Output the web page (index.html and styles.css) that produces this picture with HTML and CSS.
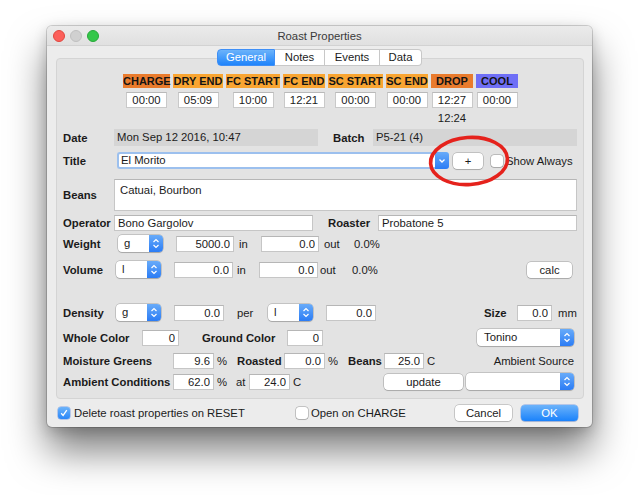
FILE: index.html
```html
<!DOCTYPE html>
<html lang="en">
<head>
  <meta charset="UTF-8">
  <meta name="viewport" content="width=device-width, initial-scale=1.0">
  <title>Roast Properties</title>
  <link rel="stylesheet" href="styles.css">
</head>
<body>
  <div class="desktop">
  <div class="window">
    <div class="titlebar">
      <div class="lights">
        <span class="light red"></span>
        <span class="light gray"></span>
        <span class="light green"></span>
      </div>
      <div class="title">Roast Properties</div>
    </div>

    <div class="tabs">
      <span class="tab active w58">General</span><span class="tab w50">Notes</span><span class="tab w55">Events</span><span class="tab w42">Data</span>
    </div>

    <div class="panel">
      <!-- event markers -->
      <div class="events">
        <div class="event w47"><span class="ev-label dark">CHARGE</span><span class="ev-time">00:00</span></div>
        <div class="event w50"><span class="ev-label">DRY END</span><span class="ev-time">05:09</span></div>
        <div class="event w54"><span class="ev-label">FC START</span><span class="ev-time">10:00</span></div>
        <div class="event w42"><span class="ev-label">FC END</span><span class="ev-time">12:21</span></div>
        <div class="event w55"><span class="ev-label">SC START</span><span class="ev-time">00:00</span></div>
        <div class="event w42"><span class="ev-label">SC END</span><span class="ev-time">00:00</span></div>
        <div class="event w42"><span class="ev-label dark">DROP</span><span class="ev-time">12:27</span><span class="ev-extra">12:24</span></div>
        <div class="event w42"><span class="ev-label cool">COOL</span><span class="ev-time">00:00</span></div>
      </div>

      <div class="row r-date">
        <span class="lbl w51">Date</span>
        <span class="readonly w204">Mon Sep 12 2016, 10:47</span>
        <span class="lbl w40 ml15">Batch</span>
        <span class="readonly w204">P5-21 (4)</span>
      </div>

      <div class="row r-title">
        <span class="lbl w54">Title</span>
        <div class="combo w332">
          <span class="combo-field">El Morito</span>
          <span class="combo-arrow">
            <svg width="14" height="17" viewBox="0 0 14 17"><path d="M4.5 7.5L7 10L9.5 7.5" fill="none" stroke="#fff" stroke-width="1.3"/></svg>
          </span>
        </div>
        <span class="btn w30 ml4">+</span>
        <span class="check ml8"></span>
        <span class="txt ml3">Show Always</span>
      </div>

      <div class="row r-beans">
        <span class="lbl w51">Beans</span>
        <div class="textarea w463">Catuai, Bourbon</div>
      </div>

      <div class="row r-operator">
        <span class="lbl w51">Operator</span>
        <input class="field left w199" value="Bono Gargolov">
        <span class="lbl w50 ml15">Roaster</span>
        <input class="field left w199" value="Probatone 5">
      </div>

      <div class="row r-weight">
        <span class="lbl w55">Weight</span>
        <div class="popup w45">
          <span class="popup-text">g</span>
          <span class="popup-arrow"><svg width="14" height="17" viewBox="0 0 14 17"><path d="M4.5 7L7 4.5L9.5 7M4.5 10L7 12.5L9.5 10" fill="none" stroke="#fff" stroke-width="1.2"/></svg></span>
        </div>
        <input class="field w58 ml13" value="5000.0">
        <span class="txt w22 ml5">in</span>
        <input class="field w58" value="0.0">
        <span class="txt w30 ml5">out</span>
        <span class="txt">0.0%</span>
      </div>

      <div class="row r-volume">
        <span class="lbl w53">Volume</span>
        <div class="popup w45">
          <span class="popup-text">l</span>
          <span class="popup-arrow"><svg width="14" height="17" viewBox="0 0 14 17"><path d="M4.5 7L7 4.5L9.5 7M4.5 10L7 12.5L9.5 10" fill="none" stroke="#fff" stroke-width="1.2"/></svg></span>
        </div>
        <input class="field w59 ml13" value="0.0">
        <span class="txt w22 ml4">in</span>
        <input class="field w59" value="0.0">
        <span class="txt w32 ml2">out</span>
        <span class="txt">0.0%</span>
        <span class="btn w45 push mr5">calc</span>
      </div>

      <div class="row r-density">
        <span class="lbl w53">Density</span>
        <div class="popup w45">
          <span class="popup-text">g</span>
          <span class="popup-arrow"><svg width="14" height="17" viewBox="0 0 14 17"><path d="M4.5 7L7 4.5L9.5 7M4.5 10L7 12.5L9.5 10" fill="none" stroke="#fff" stroke-width="1.2"/></svg></span>
        </div>
        <input class="field w50 ml13" value="0.0">
        <span class="txt w31 ml13">per</span>
        <div class="popup w45">
          <span class="popup-text">l</span>
          <span class="popup-arrow"><svg width="14" height="17" viewBox="0 0 14 17"><path d="M4.5 7L7 4.5L9.5 7M4.5 10L7 12.5L9.5 10" fill="none" stroke="#fff" stroke-width="1.2"/></svg></span>
        </div>
        <input class="field w50 ml13" value="0.0">
        <span class="lbl w33 push">Size</span>
        <input class="field w35" value="0.0">
        <span class="txt w19 ml6">mm</span>
      </div>

      <div class="row r-whole">
        <span class="lbl w79">Whole Color</span>
        <input class="field w37" value="0">
        <span class="lbl w85 ml23">Ground Color</span>
        <input class="field w36" value="0">
        <div class="popup w97 push mr3">
          <span class="popup-text wide">Tonino</span>
          <span class="popup-arrow"><svg width="14" height="17" viewBox="0 0 14 17"><path d="M4.5 7L7 4.5L9.5 7M4.5 10L7 12.5L9.5 10" fill="none" stroke="#fff" stroke-width="1.2"/></svg></span>
        </div>
      </div>

      <div class="row r-moist">
        <span class="lbl w110">Moisture Greens</span>
        <input class="field w41" value="9.6">
        <span class="txt w20 ml3">%</span>
        <span class="lbl w47">Roasted</span>
        <input class="field w41" value="0.0">
        <span class="txt w20 ml3">%</span>
        <span class="lbl w36">Beans</span>
        <input class="field w40" value="25.0">
        <span class="txt ml3">C</span>
        <span class="txt push mr3">Ambient Source</span>
      </div>

      <div class="row r-ambient">
        <span class="lbl w110">Ambient Conditions</span>
        <input class="field w41" value="62.0">
        <span class="txt w19 ml3">%</span>
        <span class="txt w13">at</span>
        <input class="field w41" value="24.0">
        <span class="txt w91 ml3">C</span>
        <span class="btn w79">update</span>
        <div class="popup w108 ml3">
          <span class="popup-text"></span>
          <span class="popup-arrow"><svg width="14" height="17" viewBox="0 0 14 17"><path d="M4.5 7L7 4.5L9.5 7M4.5 10L7 12.5L9.5 10" fill="none" stroke="#fff" stroke-width="1.2"/></svg></span>
        </div>
      </div>
    </div>

    <div class="footer">
      <label class="opt w238">
        <span class="check on"><svg width="12" height="12" viewBox="0 0 12 12"><path d="M3.2 6.3L5.1 8.4L8.8 3.2" fill="none" stroke="#fff" stroke-width="1.3"/></svg></span>
        <span class="ml4">Delete roast properties on RESET</span>
      </label>
      <label class="opt">
        <span class="check"></span>
        <span class="ml3">Open on CHARGE</span>
      </label>
      <span class="btn w57 h16 push">Cancel</span>
      <span class="btn primary w57 h16 ml9">OK</span>
    </div>

    <!-- red annotation ring drawn over the dialog -->
    <svg class="marker" width="84" height="54" viewBox="0 0 84 54">
      <ellipse cx="42" cy="27" rx="38.5" ry="23.5" fill="none" stroke="#e5221c" stroke-width="3.6" transform="rotate(-4 42 27)"/>
    </svg>
  </div>
  </div>
</body>
</html>
```

FILE: styles.css
```css
* {
  box-sizing: border-box;
}
html,
body {
  margin: 0;
  background: #fff;
}
body {
  font-family: "Liberation Sans", Arial, sans-serif;
  font-size: 11.3px;
  color: #1b1b1b;
}

/* white backdrop the dialog sits on, tall enough to hold its shadow */
.desktop {
  height: 495px;
  padding: 26px 0 0 47px;
}

.window {
  position: relative;
  width: 545px;
  height: 401px;
  background: #ececec;
  border-radius: 5px;
  box-shadow: 0 0 0 1px rgba(0, 0, 0, 0.16), 0 24px 38px rgba(0, 0, 0, 0.5), 0 4px 14px rgba(0, 0, 0, 0.18);
}

/* title bar */
.titlebar {
  display: grid;
  grid-template-columns: 1fr auto 1fr;
  align-items: center;
  height: 20px;
  background: linear-gradient(#ebebeb, #e0e0e0);
  border-bottom: 1px solid #d2d2d2;
  border-radius: 5px 5px 0 0;
}
.lights {
  display: flex;
  gap: 5px;
  padding-left: 6px;
}
.light {
  width: 12px;
  height: 12px;
  border-radius: 50%;
}
.light.red {
  background: #fc605b;
  border: 1px solid #e0473f;
}
.light.gray {
  background: #d0d0d0;
  border: 1px solid #c0c0c0;
}
.light.green {
  background: #34c749;
  border: 1px solid #27a93a;
}
.title {
  color: #3a3a3a;
}

/* segmented tabs */
.tabs {
  position: relative;
  z-index: 1;
  display: flex;
  justify-content: center;
  margin: 3px 0 -8px;
  height: 17px;
}
.tab {
  height: 17px;
  line-height: 15px;
  text-align: center;
  background: #fff;
  border: 1px solid #c8c8c8;
  border-left: none;
}
.tab:first-child {
  border-left: 1px solid #c8c8c8;
  border-radius: 4px 0 0 4px;
}
.tab:last-child {
  border-radius: 0 4px 4px 0;
}
.tab.active {
  color: #fff;
  background: linear-gradient(#6cb3fa, #1f84fb);
  border-color: #3f8ff6;
}

.panel {
  height: 341px;
  margin: 0 8px 0 9px;
  padding: 15px 6px 0 6px;
  background: #e3e3e3;
  border: 1px solid #d4d4d4;
  border-radius: 4px;
}

/* event markers */
.events {
  display: flex;
  align-items: flex-start;
  gap: 3px;
  height: 50px;
  padding-left: 60px;
}
.event {
  display: flex;
  flex-direction: column;
  align-items: center;
}
.ev-label {
  width: 100%;
  height: 14px;
  line-height: 14px;
  text-align: center;
  font-size: 11px;
  font-weight: bold;
  color: #141414;
  background: #f9a532;
}
.ev-label.dark {
  background: #e97b2d;
}
.ev-label.cool {
  background: #6f6ff6;
}
.ev-time {
  width: 41px;
  height: 16px;
  margin-top: 4px;
  line-height: 14px;
  text-align: center;
  background: #fff;
  border: 1px solid #c9c9c9;
  border-top-color: #b9b9b9;
}
.ev-extra {
  margin-top: 4px;
  line-height: 12px;
}

/* form rows */
.row {
  display: flex;
  align-items: center;
  height: 17px;
}
.r-date { margin-top: 5px; }
.r-title { margin-top: 6px; }
.r-beans { margin-top: 10px; height: 32px; }
.r-operator { margin-top: 4px; height: 16px; }
.r-weight { margin-top: 4px; }
.r-volume { margin-top: 9px; }
.r-density { margin-top: 26px; }
.r-whole { margin-top: 8px; }
.r-moist { margin-top: 6px; }
.r-ambient { margin-top: 4px; }

.lbl {
  flex: none;
  font-weight: bold;
}
.txt {
  flex: none;
}
.readonly {
  flex: none;
  height: 17px;
  line-height: 17px;
  padding-left: 3px;
  background: #d5d5d5;
}
.field {
  flex: none;
  height: 16px;
  padding: 0 3px;
  font: inherit;
  color: inherit;
  text-align: right;
  background: #fff;
  border: 1px solid #c6c6c6;
  border-top-color: #b6b6b6;
  border-radius: 0;
  outline: none;
}
.field.left {
  text-align: left;
}
.textarea {
  flex: none;
  height: 32px;
  padding: 4px 5px;
  background: #fff;
  border: 1px solid #c6c6c6;
  border-top-color: #b6b6b6;
}

.combo {
  flex: none;
  display: flex;
  height: 17px;
}
.combo-field {
  flex: 1;
  padding-left: 2px;
  line-height: 13px;
  background: #fff;
  border: 2px solid #9cc0ee;
  border-right: none;
  border-radius: 3px 0 0 3px;
}
.combo-arrow {
  width: 14px;
  background: linear-gradient(#68abf9, #2b7cf5);
  border-radius: 0 3px 3px 0;
}
.combo-arrow svg,
.popup-arrow svg {
  display: block;
}

.popup {
  flex: none;
  display: flex;
  height: 17px;
  background: #fff;
  border-radius: 4px;
  overflow: hidden;
  box-shadow: 0 0 0 0.5px rgba(0, 0, 0, 0.28), 0 1px 1px rgba(0, 0, 0, 0.14);
}
.popup-text {
  flex: 1;
  padding-left: 6px;
  line-height: 17px;
}
.popup-text.wide {
  padding-left: 7px;
}
.popup-arrow {
  width: 14px;
  background: linear-gradient(#68abf9, #2b7cf5);
}

.btn {
  flex: none;
  height: 16px;
  line-height: 16px;
  text-align: center;
  background: #fff;
  border-radius: 4px;
  box-shadow: 0 0 0 0.5px rgba(0, 0, 0, 0.3), 0 1px 1px rgba(0, 0, 0, 0.12);
}
.btn.primary {
  color: #fff;
  background: linear-gradient(#6cb3fa, #1a82fb);
  box-shadow: 0 0 0 0.5px rgba(20, 90, 220, 0.5), 0 1px 1px rgba(0, 0, 0, 0.12);
}

.check {
  flex: none;
  width: 12px;
  height: 12px;
  background: #fff;
  border-radius: 3px;
  box-shadow: 0 0 0 0.5px rgba(0, 0, 0, 0.35), 0 1px 1px rgba(0, 0, 0, 0.1);
}
.check.on {
  background: linear-gradient(#6cb3fa, #2a86f8);
  box-shadow: 0 0 0 0.5px rgba(20, 90, 220, 0.5);
}
.check svg {
  display: block;
}

.footer {
  display: flex;
  align-items: center;
  height: 28px;
  padding: 0 14px 0 11px;
}
.opt {
  flex: none;
  display: flex;
  align-items: center;
}

.marker {
  position: absolute;
  left: 380px;
  top: 108px;
}

/* sizes and spacing */
.w13 { width: 13px; }
.w19 { width: 19px; }
.w20 { width: 20px; }
.w22 { width: 22px; }
.w30 { width: 30px; }
.w31 { width: 31px; }
.w32 { width: 32px; }
.w33 { width: 33px; }
.w35 { width: 35px; }
.w36 { width: 36px; }
.w37 { width: 37px; }
.w40 { width: 40px; }
.w41 { width: 41px; }
.w42 { width: 42px; }
.w45 { width: 45px; }
.w47 { width: 47px; }
.w50 { width: 50px; }
.w51 { width: 51px; }
.w53 { width: 53px; }
.w54 { width: 54px; }
.w55 { width: 55px; }
.w57 { width: 57px; }
.w58 { width: 58px; }
.w59 { width: 59px; }
.w79 { width: 79px; }
.w85 { width: 85px; }
.w91 { width: 91px; }
.w97 { width: 97px; }
.w108 { width: 108px; }
.w110 { width: 110px; }
.w199 { width: 199px; }
.w204 { width: 204px; }
.w238 { width: 238px; }
.w332 { width: 332px; }
.w463 { width: 463px; }
.ml2 { margin-left: 2px; }
.ml3 { margin-left: 3px; }
.ml4 { margin-left: 4px; }
.ml5 { margin-left: 5px; }
.ml6 { margin-left: 6px; }
.ml8 { margin-left: 8px; }
.ml9 { margin-left: 9px; }
.ml13 { margin-left: 13px; }
.ml15 { margin-left: 15px; }
.ml23 { margin-left: 23px; }
.mr3 { margin-right: 3px; }
.mr5 { margin-right: 5px; }
.push { margin-left: auto; }
```
